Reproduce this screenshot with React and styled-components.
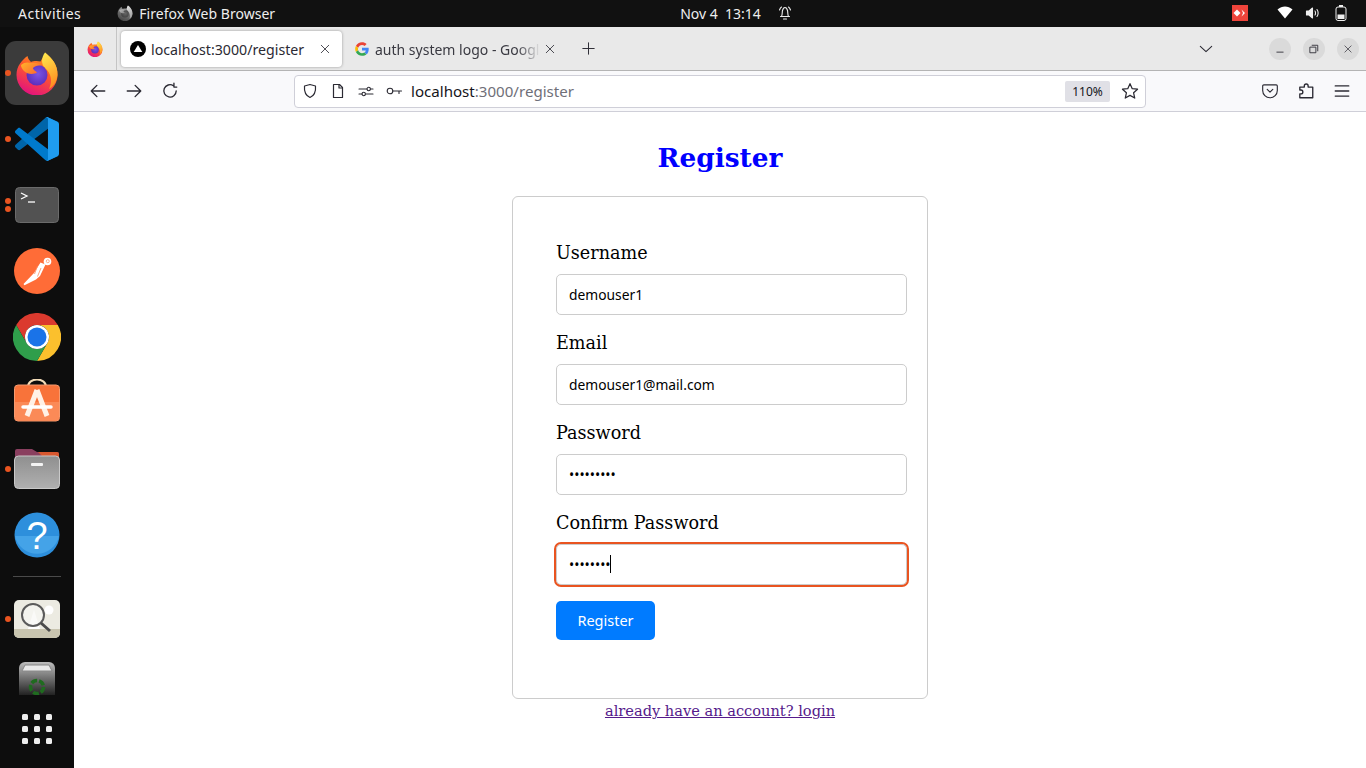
import React, { useId } from 'react';
import styled, { createGlobalStyle } from 'styled-components';

const UI_FONT = '"Noto Sans", "Open Sans", sans-serif';
const PAGE_FONT = '"DejaVu Serif", "Liberation Serif", serif';

const GlobalStyle = createGlobalStyle`
  html, body { margin: 0; padding: 0; height: 100%; background: #fff; overflow: hidden; }
  #root { height: 100%; }
  * { box-sizing: border-box; }
`;

/* ---------- desktop shell ---------- */
const Desktop = styled.div`
  width: 1366px;
  height: 768px;
  display: flex;
  flex-direction: column;
  font-family: ${UI_FONT};
`;

const TopBar = styled.header`
  height: 27px;
  flex: none;
  background: #111;
  color: #eee;
  font-size: 14px;
  display: grid;
  grid-template-columns: 1fr auto 1fr;
  align-items: center;
  padding: 0 19px 1px 18px;
`;

const TopLeft = styled.div`
  display: flex;
  align-items: center;
`;

const Activities = styled.span`
  letter-spacing: 0.5px;
`;

const TopCenter = styled.div`
  display: flex;
  align-items: center;
  gap: 16px;
  margin-left: 108px;
`;

const TopRight = styled.div`
  display: flex;
  align-items: center;
  justify-content: flex-end;
`;

const TraySlot = styled.span`
  display: flex;
  margin-right: ${(p) => p.$mr || 0}px;
`;

const AppName = styled.span`
  display: flex;
  align-items: center;
  gap: 6px;
  margin-left: 36px;
  letter-spacing: 0.02px;
  svg { filter: grayscale(1); }
`;

const Workspace = styled.div`
  flex: 1;
  display: flex;
  min-height: 0;
`;

const Dock = styled.aside`
  width: 74px;
  flex: none;
  background: #0d0d0d;
  display: flex;
  flex-direction: column;
  align-items: center;
  padding-top: 13px;
`;

const DockItem = styled.div`
  position: relative;
  width: 74px;
  height: ${(p) => p.$h || 66}px;
  flex: none;
  display: flex;
  align-items: center;
  justify-content: center;
`;

const ActiveTile = styled.div`
  width: 64px;
  height: 64px;
  border-radius: 11px;
  background: #3b3b3b;
  display: flex;
  align-items: center;
  justify-content: center;
`;

const RunDot = styled.span`
  position: absolute;
  left: 5px;
  top: ${(p) => p.$top}px;
  width: 6px;
  height: 6px;
  border-radius: 50%;
  background: #e95420;
`;

const DockRule = styled.hr`
  width: 48px;
  height: 1px;
  flex: none;
  border: 0;
  margin: 8px 0 9px;
  background: #4a4a4a;
`;

const AppGrid = styled.div`
  display: grid;
  grid-template-columns: repeat(3, 6px);
  gap: 6px;
  margin-top: 10px;
  span { width: 6px; height: 6px; border-radius: 1.5px; background: #eee; }
`;

/* ---------- browser chrome ---------- */
const Browser = styled.main`
  flex: 1;
  display: flex;
  flex-direction: column;
  min-width: 0;
`;

const TabStrip = styled.div`
  height: 44px;
  flex: none;
  background: #e9e9e9;
  border-bottom: 1px solid #b4b4b4;
  display: flex;
  align-items: center;
`;

const ViewTab = styled.div`
  width: 43px;
  height: 43px;
  border-right: 1px solid #c4c4c4;
  display: flex;
  align-items: center;
  justify-content: center;
`;

const ActiveTab = styled.div`
  width: 221px;
  height: 36px;
  margin-left: 4px;
  background: #fff;
  border-radius: 4px;
  box-shadow: 0 0 3px rgba(0, 0, 0, 0.35);
  display: flex;
  align-items: center;
  padding: 0 11px 0 9px;
  color: #2b2a33;
  font-size: 14.2px;
  white-space: nowrap;
`;

const TabTitle = styled.span`
  margin-left: 5px;
  padding-top: 1px;
  flex: 1;
  overflow: hidden;
`;

const IdleTab = styled.div`
  flex: none;
  margin-left: 13px;
  display: flex;
  align-items: center;
  color: #3a3a42;
  font-size: 14px;
  white-space: nowrap;
`;

const FadedTitle = styled.span`
  width: 169px;
  margin-left: 6px;
  padding-top: 1px;
  overflow: hidden;
  -webkit-mask-image: linear-gradient(to right, #000 84%, transparent 98%);
  mask-image: linear-gradient(to right, #000 84%, transparent 98%);
`;

const NewTab = styled.div`
  margin-left: 26px;
  display: flex;
`;

const Chevron = styled.div`
  margin-left: auto;
  display: flex;
  margin-right: 56px;
`;

const WindowButtons = styled.div`
  display: flex;
  gap: 12px;
  margin-right: 7px;
`;

const WindowButton = styled.div`
  width: 22px;
  height: 22px;
  border-radius: 50%;
  background: #dadada;
  display: flex;
  align-items: center;
  justify-content: center;
`;

const NavBar = styled.div`
  height: 41px;
  flex: none;
  background: #f9f9fb;
  border-bottom: 1px solid #cfcfd8;
  display: flex;
  align-items: center;
`;

const NavIcons = styled.div`
  width: 220px;
  display: flex;
  gap: 18px;
  padding-left: 15px;
`;

const UrlBar = styled.div`
  width: 852px;
  height: 33px;
  background: #fff;
  border: 1px solid #cfcfd8;
  border-radius: 4px;
  display: flex;
  align-items: center;
  padding-left: 7px;
  font-size: 15.1px;
  color: #6f6f78;
`;

const UrlIcons = styled.div`
  display: flex;
  gap: 12px;
  margin-right: 9px;
`;

const Host = styled.span`
  color: #15141a;
`;

const ZoomChip = styled.span`
  margin-left: auto;
  width: 45px;
  height: 21px;
  border-radius: 2px;
  background: #e0e0e6;
  color: #15141a;
  font-size: 12px;
  display: flex;
  align-items: center;
  justify-content: center;
`;

const Star = styled.span`
  display: flex;
  margin: 0 6px 0 11px;
`;

const ToolIcons = styled.div`
  margin-left: 115px;
  display: flex;
  gap: 18px;
`;

/* ---------- the page itself ---------- */
const Page = styled.section`
  flex: 1;
  background: #fff;
  display: flex;
  flex-direction: column;
  align-items: center;
  font-family: ${PAGE_FONT};
  color: #000;
`;

const Title = styled.h1`
  margin: 28px 0 20px;
  height: 36px;
  line-height: 36px;
  font-size: 26.4px;
  font-weight: 700;
  color: #0000ff;
`;

const Card = styled.form`
  width: 416px;
  height: 503px;
  border: 1px solid #ccc;
  border-radius: 6px;
  padding: 44px 43px;
`;

const Label = styled.label`
  display: block;
  height: 21px;
  line-height: 21px;
  padding-top: 2px;
  margin-bottom: 12px;
  font-size: 17.6px;
`;

const FieldBox = styled.div`
  position: relative;
  width: 351px;
  height: 41px;
  margin-bottom: 16px;
`;

const Input = styled.input`
  display: block;
  width: 100%;
  height: 100%;
  padding: 0 12px 0;
  border: 1px solid #ccc;
  border-radius: 5px;
  background: #fff;
  color: #000;
  font-family: ${UI_FONT};
  font-size: 13.8px;
  outline: ${(p) => (p.$focused ? '2px solid #e95420' : 'none')};
  outline-offset: 0;
`;

const Caret = styled.span`
  position: absolute;
  left: 54px;
  top: 11px;
  width: 1px;
  height: 18px;
  background: #000;
`;

const SubmitButton = styled.button`
  display: block;
  width: 99px;
  height: 39px;
  padding: 0 0 2px;
  border: 0;
  border-radius: 5px;
  background: #007bff;
  color: #fff;
  font-family: ${UI_FONT};
  font-size: 14.5px;
`;

const LoginLink = styled.a`
  margin-top: 3px;
  font-size: 14.6px;
  line-height: 18px;
  color: #551a8b;
  text-decoration: underline;
`;

/* ---------- drawings ---------- */
const Line = styled.svg`
  display: block;
  fill: none;
  stroke: ${(p) => p.$c || '#2b2a33'};
  stroke-width: ${(p) => p.$w || 1.2};
  stroke-linecap: round;
  stroke-linejoin: round;
  flex: none;
`;

const Glyph = ({ s = 18, c, w, children }) => (
  <Line width={s} height={s} viewBox="0 0 16 16" $c={c} $w={w}>{children}</Line>
);

const Firefox = ({ size }) => {
  const id = useId();
  return (
    <svg width={size} height={size} viewBox="0 0 44 44">
      <defs>
        <linearGradient id={id + 'a'} x1="0.8" y1="0" x2="0.35" y2="1">
          <stop offset="0" stopColor="#ffb01f" />
          <stop offset="0.45" stopColor="#ff5a2a" />
          <stop offset="1" stopColor="#e3127e" />
        </linearGradient>
        <linearGradient id={id + 'b'} x1="0.3" y1="0" x2="0.6" y2="1">
          <stop offset="0" stopColor="#ffe64d" />
          <stop offset="1" stopColor="#ff8a1e" />
        </linearGradient>
        <linearGradient id={id + 'd'} x1="0" y1="0" x2="1" y2="0.6">
          <stop offset="0" stopColor="#ffb52a" />
          <stop offset="1" stopColor="#ff6a2e" />
        </linearGradient>
        <radialGradient id={id + 'c'} cx="0.55" cy="0.45" r="0.6">
          <stop offset="0" stopColor="#7a55e6" />
          <stop offset="1" stopColor="#5a2bb8" />
        </radialGradient>
      </defs>
      <path fill={`url(#${id}a)`} d="M1.500 24A20.500 20.500 0 0 0 42.500 24C42.500 14 37 7 30 1.500C30.500 5 27 7 25.500 10.500C22 9.500 18 10 16 11C14.500 9.500 13 8 12.500 5C7 9 1.500 15 1.500 24Z" />
      <path fill={`url(#${id}b)`} d="M30 1.500C37 7 43 14 42.500 24C42 31 38 36 34 38C38 30 36 22 30 17C26 13 26 7 30 1.500Z" />
      <circle cx="22" cy="24" r="10.500" fill={`url(#${id}c)`} />
      <path fill={`url(#${id}d)`} d="M6 14C9 11 13 11 16 12C20 11 24 12 27 15C23 14 20 15 18 17C18 19 21 20 22 21.500C18 24 12 23 9 20C7 18 6 16 6 14Z" />
    </svg>
  );
};

const VsCode = () => (
  <svg width="44" height="44" viewBox="0 0 100 100">
    <path fill="#0065a9" d="M96.400 10.800 75.800.9c-2.400-1.200-5.300-.7-7.200 1.200L1.300 63.200c-1.800 1.600-1.800 4.500 0 6.200l5.400 4.900c1.500 1.300 3.600 1.400 5.200.3l81-61.400c2.700-2.100 6.600-.2 6.600 3.200v-.2c0-2.400-1.400-4.700-3.600-5.800z" />
    <path fill="#007acc" d="M96.400 89.200 75.800 99.100c-2.400 1.200-5.300.7-7.200-1.200L1.300 36.800c-1.800-1.600-1.800-4.500 0-6.200l5.400-4.900c1.500-1.300 3.600-1.400 5.200-.3l81 61.400c2.700 2.100 6.600.2 6.600-3.200v.2c0 2.400-1.400 4.700-3.600 5.800z" />
    <path fill="#1f9cf0" d="M75.800 99.100c-2.400 1.200-5.300.6-7.200-1.200 2.300 2.300 6.300.7 6.300-2.600V4.700c0-3.300-4-4.900-6.300-2.600 1.900-1.900 4.800-2.400 7.200-1.200l20.600 9.900c2.200 1 3.600 3.300 3.600 5.800v66.800c0 2.500-1.400 4.800-3.600 5.800z" />
  </svg>
);

const Terminal = () => (
  <svg width="44" height="36" viewBox="0 0 44 36">
    <rect x="0.500" y="0.500" width="43" height="35" rx="4" fill="#525252" stroke="#6b6b6b" />
    <path d="M6 6l6 3-6 3" fill="none" stroke="#fff" strokeWidth="1.300" />
    <path d="M13 15h7" stroke="#fff" strokeWidth="1.300" />
  </svg>
);

const Postman = () => (
  <svg width="46" height="46" viewBox="0 0 46 46">
    <circle cx="23" cy="23" r="23" fill="#ff6c37" />
    <path d="M31.500 16.500L26.500 14.500L20 25L9.500 36L10.500 37.300L22 31.500L26 28Z" fill="#fff" />
    <path d="M23.500 18L20.500 26M27 20L23.500 28.500" fill="none" stroke="#ff8a5e" strokeWidth="0.800" />
    <circle cx="33.500" cy="13.500" r="3.800" fill="#fff" />
    <circle cx="33.800" cy="13.200" r="1.500" fill="none" stroke="#ff8a5e" strokeWidth="0.700" />
  </svg>
);

const Chrome = () => (
  <svg width="48" height="48" viewBox="0 0 48 48">
    <path fill="#db3a2e" d="M3.200 12A24 24 0 0 1 44.800 12H24A12 12 0 0 0 13.600 30Z" />
    <path fill="#fbc02d" d="M44.800 12A24 24 0 0 1 24 48L34.400 30A12 12 0 0 0 24 12Z" />
    <path fill="#2f9e4b" d="M24 48A24 24 0 0 1 3.200 12L13.600 30A12 12 0 0 0 34.400 30Z" />
    <circle cx="24" cy="24" r="12" fill="#fff" />
    <circle cx="24" cy="24" r="9.500" fill="#1a73e8" />
  </svg>
);

const AppStore = () => (
  <svg width="46" height="48" viewBox="0 0 46 48">
    <path d="M14 8C14 -2 32 -2 32 8" fill="none" stroke="#f3dcb8" strokeWidth="2" />
    <rect x="0.500" y="6" width="45" height="36" rx="3.500" fill="#f8733a" stroke="#f59a6f" />
    <path d="M1 23H45V38.500a3 3 0 0 1-3 3H4a3 3 0 0 1-3-3Z" fill="#fb8a57" />
    <path d="M23 11L13 37M23 11L33 37" stroke="#fff1e6" strokeWidth="5" fill="none" />
    <path d="M9 28H37" stroke="#fff" strokeWidth="3.500" strokeLinecap="round" />
  </svg>
);

const Files = () => {
  const id = useId();
  return (
    <svg width="46" height="42" viewBox="0 0 46 42">
      <defs>
        <linearGradient id={id} x1="0" y1="0" x2="0" y2="1">
          <stop offset="0" stopColor="#8f8f8f" />
          <stop offset="1" stopColor="#b0b0b0" />
        </linearGradient>
      </defs>
      <path d="M1 9V3a2 2 0 0 1 2-2H18l5 3H43a2 2 0 0 1 2 2V14H1Z" fill="#8a3f5f" />
      <path d="M24 4H43a2 2 0 0 1 2 2V14H34Z" fill="#d9582f" />
      <rect x="0.500" y="8" width="45" height="32.500" rx="4" fill={`url(#${id})`} stroke="#c9c9c9" />
      <rect x="17" y="15" width="12" height="3" rx="1" fill="#f4f4f4" />
    </svg>
  );
};

const Help = () => (
  <svg width="46" height="46" viewBox="0 0 46 46">
    <circle cx="23" cy="23" r="22.500" fill="#2d8fdc" />
    <path d="M1 24H45A22.500 22.500 0 0 1 1 24Z" fill="#44a3e8" />
    <text x="23" y="37" textAnchor="middle" fontFamily="'Liberation Sans', sans-serif" fontSize="38" fill="#fff">?</text>
  </svg>
);

const Viewer = () => (
  <svg width="46" height="38" viewBox="0 0 46 38">
    <rect width="46" height="38" rx="5" fill="#ecebe2" />
    <path d="M0 29H46V33a5 5 0 0 1-5 5H5a5 5 0 0 1-5-5Z" fill="#c9c5b0" />
    <path d="M14 29L20 10l6 19Z" fill="#fff" />
    <circle cx="35" cy="10" r="4.500" fill="#fff" />
    <circle cx="19" cy="15" r="11" fill="#f8f8f5" fillOpacity="0.700" stroke="#5b5b5b" strokeWidth="2" />
    <path d="M27 23l9 8" stroke="#4a4a4a" strokeWidth="3" />
  </svg>
);

const Trash = () => {
  const id = useId();
  return (
    <svg width="36" height="34" viewBox="0 0 36 34">
      <defs>
        <linearGradient id={id} x1="0" y1="0" x2="0" y2="1">
          <stop offset="0" stopColor="#bdbdbd" />
          <stop offset="1" stopColor="#222" />
        </linearGradient>
      </defs>
      <path d="M0 7a6 6 0 0 1 6-6H30a6 6 0 0 1 6 6V34H0Z" fill={`url(#${id})`} />
      <path d="M6 4H30L33 10H3Z" fill="#e9e9e9" stroke="#888" strokeWidth="1" />
      <circle cx="18" cy="26" r="6.500" fill="none" stroke="#1f6b1f" strokeWidth="3.500" strokeDasharray="6 2" />
    </svg>
  );
};

const GoogleG = () => (
  <svg width="14" height="14" viewBox="0 0 48 48">
    <path fill="#ea4335" d="M24 10c3.500 0 6.600 1.200 9 3.500l6.800-6.800C35.600 2.800 30.200.5 24 .5 14.800.5 6.900 5.800 3 13.500l7.900 6.100C12.800 14 18 10 24 10z" />
    <path fill="#4285f4" d="M47 24.500c0-1.600-.1-3.100-.4-4.500H24v9h13c-.6 3-2.300 5.500-4.800 7.200l7.600 5.900C44.200 38 47 31.800 47 24.500z" />
    <path fill="#fbbc05" d="M10.900 28.600c-.5-1.400-.7-3-.7-4.600s.3-3.100.7-4.600L3 13.500C1.400 16.700.5 20.200.5 24s.9 7.300 2.500 10.500l7.900-5.900z" />
    <path fill="#34a853" d="M24 47.500c6.200 0 11.500-2 15.300-5.500l-7.600-5.900c-2.100 1.400-4.700 2.300-7.700 2.300-6 0-11.200-4-13.100-9.800L3 34.500C6.900 42.200 14.800 47.500 24 47.500z" />
  </svg>
);

const NextIcon = () => (
  <svg width="16" height="16" viewBox="0 0 16 16">
    <circle cx="8" cy="8" r="8" fill="#000" />
    <path d="M8 4l4.300 7H3.700Z" fill="#fff" />
  </svg>
);

const Close = ({ s = 12 }) => (
  <Glyph s={s} w={1.100}><path d="M3 3l10 10M13 3L3 13" /></Glyph>
);

const Field = ({ label, type = 'text', value, focused }) => (
  <>
    <Label>{label}</Label>
    <FieldBox>
      <Input type={type} defaultValue={value} $focused={focused} />
      {focused && <Caret />}
    </FieldBox>
  </>
);

export default function App() {
  return (
    <Desktop>
      <GlobalStyle />
      <TopBar>
        <TopLeft>
          <Activities>Activities</Activities>
          <AppName>
            <Firefox size={16} />
            Firefox Web Browser
          </AppName>
        </TopLeft>
        <TopCenter>
          <span>Nov 4&nbsp;&nbsp;13:14</span>
          <Glyph s={16} c="#eee" w={1.100}>
            <path d="M4.500 11.500c1-1.500.5-4 1-6S7 2.500 8 2.500s2 1 2.500 3 0 4.500 1 6ZM3.500 11.500h9M6.500 14h3M2.500 5C3 3.500 3.500 2.500 4.500 2M13.500 5c-.5-1.500-1-2.500-2-3" />
          </Glyph>
        </TopCenter>
        <TopRight>
          <TraySlot $mr={29}>
            <svg width="16" height="16" viewBox="0 0 16 16">
              <rect width="16" height="16" fill="#ef443b" />
              <path d="M5 4.500L8.500 8 5 11.500 1.500 8Z" fill="#fff" />
              <path d="M9.500 4.500L13 8l-3.500 3.500L11 8Z" fill="#fff" />
            </svg>
          </TraySlot>
          <TraySlot $mr={12}>
            <svg width="16" height="14" viewBox="0 0 16 14">
              <path d="M0.500 3.500C5 -0.500 11 -0.500 15.500 3.500L8 12.500Z" fill="#fff" />
            </svg>
          </TraySlot>
          <TraySlot $mr={14}>
            <Glyph s={16} c="#eee" w={1.100}>
              <path d="M1.500 6v4H4l3.500 3V3L4 6Z" fill="#eee" />
              <path d="M10 6c.7.8.7 3.200 0 4M12 4.500c1.500 1.800 1.500 5.200 0 7" />
            </Glyph>
          </TraySlot>
          <svg width="12" height="16" viewBox="0 0 12 16">
            <rect x="1" y="2" width="10" height="13.500" rx="2" fill="none" stroke="#eee" />
            <rect x="4" y="0" width="4" height="2" fill="#eee" />
            <rect x="2.500" y="9.500" width="7" height="4.500" fill="#eee" />
          </svg>
        </TopRight>
      </TopBar>

      <Workspace>
        <Dock>
          <DockItem>
            <ActiveTile><Firefox size={44} /></ActiveTile>
            <RunDot $top={30} />
          </DockItem>
          <DockItem><VsCode /><RunDot $top={30} /></DockItem>
          <DockItem>
            <Terminal />
            <RunDot $top={26} />
            <RunDot $top={34} />
          </DockItem>
          <DockItem><Postman /></DockItem>
          <DockItem><Chrome /></DockItem>
          <DockItem><AppStore /></DockItem>
          <DockItem><Files /><RunDot $top={30} /></DockItem>
          <DockItem><Help /></DockItem>
          <DockRule />
          <DockItem><Viewer /><RunDot $top={30} /></DockItem>
          <DockItem $h={52}><Trash /></DockItem>
          <AppGrid>
            {Array.from({ length: 9 }, (_, i) => <span key={i} />)}
          </AppGrid>
        </Dock>

        <Browser>
          <TabStrip>
            <ViewTab><Firefox size={16} /></ViewTab>
            <ActiveTab>
              <NextIcon />
              <TabTitle>localhost:3000/register</TabTitle>
              <Close />
            </ActiveTab>
            <IdleTab>
              <GoogleG />
              <FadedTitle>auth system logo - Google Search</FadedTitle>
              <Close />
            </IdleTab>
            <NewTab>
              <Glyph s={13} w={1.200}><path d="M8 1v14M1 8h14" /></Glyph>
            </NewTab>
            <Chevron>
              <Glyph s={14} w={1.200}><path d="M1.500 5L8 11l6.500-6" /></Glyph>
            </Chevron>
            <WindowButtons>
              <WindowButton><Glyph s={10} w={1.400}><path d="M3 13h10" /></Glyph></WindowButton>
              <WindowButton>
                <Glyph s={10} w={1.400}><path d="M2 5h9v9H2ZM5 2h9v9" /></Glyph>
              </WindowButton>
              <WindowButton><Close s={10} /></WindowButton>
            </WindowButtons>
          </TabStrip>

          <NavBar>
            <NavIcons>
              <Glyph><path d="M14 8H2M7 3L2 8l5 5" /></Glyph>
              <Glyph><path d="M2 8h12M9 3l5 5-5 5" /></Glyph>
              <Glyph><path d="M13.500 8A5.500 5.500 0 1 1 11 3.300M11.500 1v3.500H14" /></Glyph>
            </NavIcons>
            <UrlBar>
              <UrlIcons>
                <Glyph s={16}><path d="M8 1.500l5.500 1.500c.5 5.500-1 9.500-5.500 11.500C3.500 12.500 2 8.500 2.500 3Z" /></Glyph>
                <Glyph s={16}><path d="M3.500 1.500H9.500L12.500 4.500V14.500H3.500Z" /><path d="M9 2v3h3" /></Glyph>
                <Glyph s={16} w={1.100}>
                  <path d="M1 6h8M12.500 6H15M1 11h3M7.500 11H15" />
                  <circle cx="10.700" cy="6" r="1.700" /><circle cx="5.700" cy="11" r="1.700" />
                </Glyph>
                <Glyph s={16} w={1.100}><circle cx="4" cy="8" r="2.800" /><path d="M7 8h8.500M13 8v2.500" /></Glyph>
              </UrlIcons>
              <Host>localhost</Host>:3000/register
              <ZoomChip>110%</ZoomChip>
              <Star>
                <Glyph s={18} w={1.100}><path d="M8 1.500l2 4.400 4.700.5-3.500 3.200 1 4.700L8 11.900 3.800 14.300l1-4.700L1.300 6.400 6 5.900Z" /></Glyph>
              </Star>
            </UrlBar>
            <ToolIcons>
              <Glyph w={1}><path d="M2.500 2.500h11a1 1 0 0 1 1 1v4a6.500 6.500 0 0 1-13 0v-4a1 1 0 0 1 1-1Z" /><path d="M5.500 6.500L8 9l2.500-2.500" /></Glyph>
              <Glyph>
                <path d="M6 4V3a1.700 1.700 0 0 1 3.400 0v1h4.100v9.500H2V10h1a1.700 1.700 0 0 0 0-3.400H2V4Z" transform="translate(0.500 0.500)" />
              </Glyph>
              <Glyph><path d="M2 3.500h12M2 8h12M2 12.500h12" /></Glyph>
            </ToolIcons>
          </NavBar>

          <Page>
            <Title>Register</Title>
            <Card onSubmit={(e) => e.preventDefault()}>
              <Field label="Username" value="demouser1" />
              <Field label="Email" type="email" value="demouser1@mail.com" />
              <Field label="Password" type="password" value="demouser1" />
              <Field label="Confirm Password" type="password" value="demouser" focused />
              <SubmitButton type="submit">Register</SubmitButton>
            </Card>
            <LoginLink href="#login">already have an account? login</LoginLink>
          </Page>
        </Browser>
      </Workspace>
    </Desktop>
  );
}
